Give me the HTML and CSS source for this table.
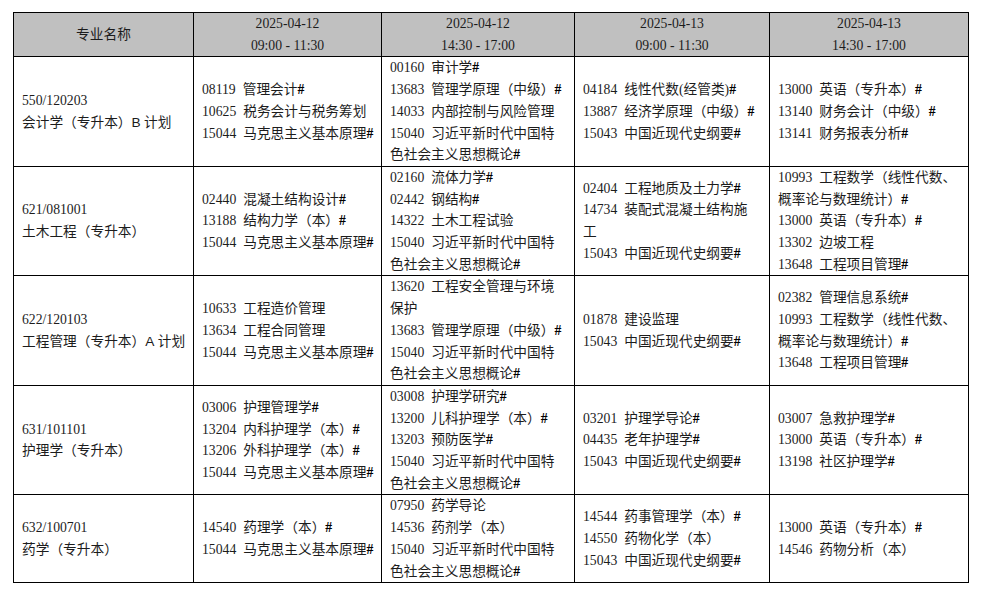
FILE: index.html
```html
<!DOCTYPE html>
<html lang="zh-CN">
<head>
<meta charset="utf-8">
<title>考试安排</title>
<link rel="stylesheet" href="styles.css">
</head>
<body>
<div class="page">
<table class="schedule">
  <colgroup>
    <col class="w-major">
    <col class="w-s1">
    <col class="w-s2">
    <col class="w-s3">
    <col class="w-s4">
  </colgroup>
  <thead>
    <tr>
      <th>专业名称</th>
      <th>2025-04-12<br>09:00 - 11:30</th>
      <th>2025-04-12<br>14:30 - 17:00</th>
      <th>2025-04-13<br>09:00 - 11:30</th>
      <th>2025-04-13<br>14:30 - 17:00</th>
    </tr>
  </thead>
  <tbody>
    <tr>
      <td class="major">550/120203<br>会计学（专升本）<span class="lat">B</span> 计划</td>
      <td><div class="list">
        <div><span class="code">08119</span>管理会计<b>#</b></div>
        <div><span class="code">10625</span>税务会计与税务筹划</div>
        <div><span class="code">15044</span>马克思主义基本原理<b>#</b></div>
      </div></td>
      <td><div class="list">
        <div><span class="code">00160</span>审计学<b>#</b></div>
        <div><span class="code">13683</span>管理学原理（中级）<b>#</b></div>
        <div><span class="code">14033</span>内部控制与风险管理</div>
        <div><span class="code">15040</span>习近平新时代中国特色社会主义思想概论<b>#</b></div>
      </div></td>
      <td><div class="list">
        <div><span class="code">04184</span>线性代数(经管类)<b>#</b></div>
        <div><span class="code">13887</span>经济学原理（中级）<b>#</b></div>
        <div><span class="code">15043</span>中国近现代史纲要<b>#</b></div>
      </div></td>
      <td><div class="list">
        <div><span class="code">13000</span>英语（专升本）<b>#</b></div>
        <div><span class="code">13140</span>财务会计（中级）<b>#</b></div>
        <div><span class="code">13141</span>财务报表分析<b>#</b></div>
      </div></td>
    </tr>
    <tr>
      <td class="major">621/081001<br>土木工程（专升本）</td>
      <td><div class="list">
        <div><span class="code">02440</span>混凝土结构设计<b>#</b></div>
        <div><span class="code">13188</span>结构力学（本）<b>#</b></div>
        <div><span class="code">15044</span>马克思主义基本原理<b>#</b></div>
      </div></td>
      <td><div class="list">
        <div><span class="code">02160</span>流体力学<b>#</b></div>
        <div><span class="code">02442</span>钢结构<b>#</b></div>
        <div><span class="code">14322</span>土木工程试验</div>
        <div><span class="code">15040</span>习近平新时代中国特色社会主义思想概论<b>#</b></div>
      </div></td>
      <td><div class="list">
        <div><span class="code">02404</span>工程地质及土力学<b>#</b></div>
        <div><span class="code">14734</span>装配式混凝土结构施工</div>
        <div><span class="code">15043</span>中国近现代史纲要<b>#</b></div>
      </div></td>
      <td><div class="list">
        <div><span class="code">10993</span>工程数学（线性代数、概率论与数理统计）<b>#</b></div>
        <div><span class="code">13000</span>英语（专升本）<b>#</b></div>
        <div><span class="code">13302</span>边坡工程</div>
        <div><span class="code">13648</span>工程项目管理<b>#</b></div>
      </div></td>
    </tr>
    <tr>
      <td class="major">622/120103<br>工程管理（专升本）<span class="lat">A</span> 计划</td>
      <td><div class="list">
        <div><span class="code">10633</span>工程造价管理</div>
        <div><span class="code">13634</span>工程合同管理</div>
        <div><span class="code">15044</span>马克思主义基本原理<b>#</b></div>
      </div></td>
      <td><div class="list">
        <div><span class="code">13620</span>工程安全管理与环境保护</div>
        <div><span class="code">13683</span>管理学原理（中级）<b>#</b></div>
        <div><span class="code">15040</span>习近平新时代中国特色社会主义思想概论<b>#</b></div>
      </div></td>
      <td><div class="list">
        <div><span class="code">01878</span>建设监理</div>
        <div><span class="code">15043</span>中国近现代史纲要<b>#</b></div>
      </div></td>
      <td><div class="list">
        <div><span class="code">02382</span>管理信息系统<b>#</b></div>
        <div><span class="code">10993</span>工程数学（线性代数、概率论与数理统计）<b>#</b></div>
        <div><span class="code">13648</span>工程项目管理<b>#</b></div>
      </div></td>
    </tr>
    <tr>
      <td class="major">631/101101<br>护理学（专升本）</td>
      <td><div class="list">
        <div><span class="code">03006</span>护理管理学<b>#</b></div>
        <div><span class="code">13204</span>内科护理学（本）<b>#</b></div>
        <div><span class="code">13206</span>外科护理学（本）<b>#</b></div>
        <div><span class="code">15044</span>马克思主义基本原理<b>#</b></div>
      </div></td>
      <td><div class="list">
        <div><span class="code">03008</span>护理学研究<b>#</b></div>
        <div><span class="code">13200</span>儿科护理学（本）<b>#</b></div>
        <div><span class="code">13203</span>预防医学<b>#</b></div>
        <div><span class="code">15040</span>习近平新时代中国特色社会主义思想概论<b>#</b></div>
      </div></td>
      <td><div class="list">
        <div><span class="code">03201</span>护理学导论<b>#</b></div>
        <div><span class="code">04435</span>老年护理学<b>#</b></div>
        <div><span class="code">15043</span>中国近现代史纲要<b>#</b></div>
      </div></td>
      <td><div class="list">
        <div><span class="code">03007</span>急救护理学<b>#</b></div>
        <div><span class="code">13000</span>英语（专升本）<b>#</b></div>
        <div><span class="code">13198</span>社区护理学<b>#</b></div>
      </div></td>
    </tr>
    <tr>
      <td class="major">632/100701<br>药学（专升本）</td>
      <td><div class="list">
        <div><span class="code">14540</span>药理学（本）<b>#</b></div>
        <div><span class="code">15044</span>马克思主义基本原理<b>#</b></div>
      </div></td>
      <td><div class="list">
        <div><span class="code">07950</span>药学导论</div>
        <div><span class="code">14536</span>药剂学（本）</div>
        <div><span class="code">15040</span>习近平新时代中国特色社会主义思想概论<b>#</b></div>
      </div></td>
      <td><div class="list">
        <div><span class="code">14544</span>药事管理学（本）<b>#</b></div>
        <div><span class="code">14550</span>药物化学（本）</div>
        <div><span class="code">15043</span>中国近现代史纲要<b>#</b></div>
      </div></td>
      <td><div class="list">
        <div><span class="code">13000</span>英语（专升本）<b>#</b></div>
        <div><span class="code">14546</span>药物分析（本）</div>
      </div></td>
    </tr>
  </tbody>
</table>
</div>
</body>
</html>
```

FILE: styles.css
```css
html, body {
  margin: 0;
  padding: 0;
  background: #ffffff;
}

.page {
  padding: 12px 0 0 13px;
}

.schedule {
  border-collapse: collapse;
  table-layout: fixed;
  width: 955px;
  font-family: "Liberation Serif", "Noto Sans CJK SC", serif;
  font-size: 13.7px;
  line-height: 21.7px;
  color: #1c1c1c;
}

.w-major { width: 180px; }
.w-s1 { width: 188px; }
.w-s2 { width: 193px; }
.w-s3 { width: 195px; }
.w-s4 { width: 199px; }

.schedule th,
.schedule td {
  border: 1px solid #000000;
  padding: 0 3px 0 8px;
  vertical-align: middle;
}

.schedule th {
  background: #c0c0c0;
  font-weight: normal;
  text-align: center;
  padding: 0 8px;
}

.schedule td {
  text-align: left;
}

.list {
  max-width: 175px;
}

.schedule td:last-child .list {
  max-width: none;
}

.code {
  margin-right: 7px;
}

.schedule b {
  font-weight: bold;
  color: #000000;
}

.lat {
  font-family: "Liberation Sans", sans-serif;
}
```
